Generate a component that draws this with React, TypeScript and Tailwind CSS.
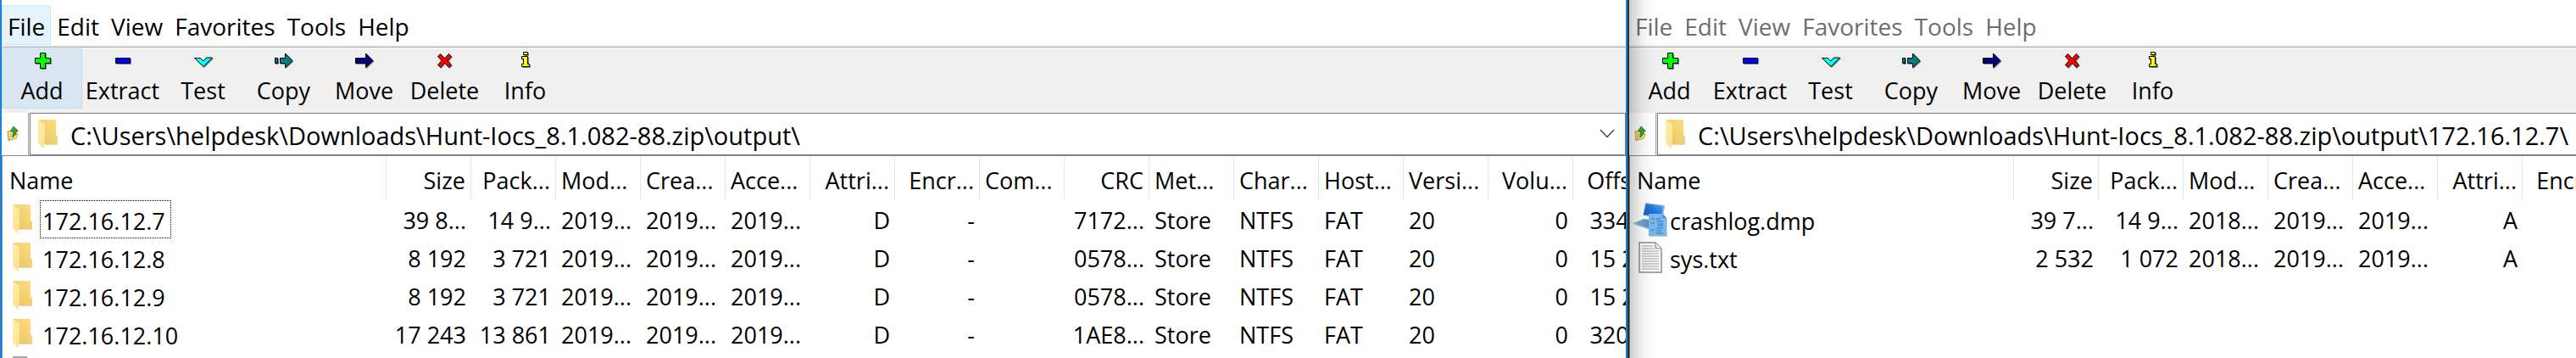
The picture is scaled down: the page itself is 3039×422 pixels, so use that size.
import type { ReactNode } from "react";

type Column = { label: string; right?: boolean };
type IconKind = "folder" | "dump" | "text" | "page";
type Entry = { name: string; icon: IconKind; focused?: boolean; cells: string[] };

const columns: Column[] = [
  { label: "Size", right: true },
  { label: "Pack...", right: true },
  { label: "Mod..." },
  { label: "Crea..." },
  { label: "Acce..." },
  { label: "Attri...", right: true },
  { label: "Encr...", right: true },
  { label: "Com..." },
  { label: "CRC", right: true },
  { label: "Met..." },
  { label: "Char..." },
  { label: "Host..." },
  { label: "Versi..." },
  { label: "Volu...", right: true },
  { label: "Offset", right: true },
];

const outputEntries: Entry[] = [
  { name: "172.16.12.7", icon: "folder", focused: true, cells: ["39 8...", "14 9...", "2019...", "2019...", "2019...", "D", "-", "", "7172...", "Store", "NTFS", "FAT", "20", "0", "334 ..."] },
  { name: "172.16.12.8", icon: "folder", cells: ["8 192", "3 721", "2019...", "2019...", "2019...", "D", "-", "", "0578...", "Store", "NTFS", "FAT", "20", "0", "15 2..."] },
  { name: "172.16.12.9", icon: "folder", cells: ["8 192", "3 721", "2019...", "2019...", "2019...", "D", "-", "", "0578...", "Store", "NTFS", "FAT", "20", "0", "15 2..."] },
  { name: "172.16.12.10", icon: "folder", cells: ["17 243", "13 861", "2019...", "2019...", "2019...", "D", "-", "", "1AE8...", "Store", "NTFS", "FAT", "20", "0", "320 ..."] },
  { name: "", icon: "page", cells: [] },
];

const hostEntries: Entry[] = [
  { name: "crashlog.dmp", icon: "dump", cells: ["39 7...", "14 9...", "2018...", "2019...", "2019...", "A"] },
  { name: "sys.txt", icon: "text", cells: ["2 532", "1 072", "2018...", "2019...", "2019...", "A"] },
];

const menus = ["File", "Edit", "View", "Favorites", "Tools", "Help"];

function Shadowed({ d, fill }: { d: string; fill: string }) {
  return (
    <>
      <path d={d} transform="translate(1 1)" fill="#808080" stroke="#808080" />
      <path d={d} fill={fill} stroke="#000" />
    </>
  );
}

const tools: { label: string; drawing: ReactNode }[] = [
  { label: "Add", drawing: <Shadowed fill="#00ff00" d="M13.5 3.5h6v6h6v6h-6v6h-6v-6h-6v-6h6z" /> },
  { label: "Extract", drawing: <Shadowed fill="#0000ff" d="M7.5 9.5h17v6h-17z" /> },
  { label: "Test", drawing: <Shadowed fill="#00ffff" d="M5.5 9.5h7l3.5 3.5 3.5-4h7l-10.5 10.5z" /> },
  {
    label: "Copy",
    drawing: (
      <>
        <Shadowed fill="#008080" d="M5.5 9.5h3v6h-3z" />
        <Shadowed fill="#008080" d="M11.5 9.5h6v-5.5l8.5 8.5-8.5 8v-5h-6z" />
      </>
    ),
  },
  { label: "Move", drawing: <Shadowed fill="#000080" d="M5.5 9.5h12v-5.5l8.5 8.5-8.5 8v-5h-12z" /> },
  {
    label: "Delete",
    drawing: <Shadowed fill="#ff0000" d="M10.5 4.5l5 5.5 5-5.5 3 3-4.5 5 4.5 5-3 3-5-5.500-5 5.500-3-3 4.500-5-4.500-5z" />,
  },
  {
    label: "Info",
    drawing: (
      <>
        <Shadowed fill="#ffff00" d="M13.5 2.5h5v3h-5z" />
        <Shadowed fill="#ffff00" d="M11.5 7.5h7v9h2v3h-9v-3h2v-6h-2z" />
      </>
    ),
  },
];

function FolderIcon() {
  return (
    <svg width="24" height="35" viewBox="0 0 24 35" className="shrink-0" aria-hidden="true">
      <defs>
        <linearGradient id="folder-back" x1="0" y1="1" x2="1" y2="0">
          <stop offset="0" stopColor="#e9c25d" />
          <stop offset="1" stopColor="#fddf83" />
        </linearGradient>
        <linearGradient id="folder-front" x1="0" y1="0" x2="1" y2="1">
          <stop offset="0" stopColor="#ffedb0" />
          <stop offset="1" stopColor="#fde08a" />
        </linearGradient>
      </defs>
      <path d="M7 29h17l-3 1H9z" fill="#d8d8d8" />
      <path d="M0 0h21v18l2 2v9H4z" fill="url(#folder-back)" />
      <path d="M0 0l8 5.500V27l-1 1v6.500L0 28z" fill="url(#folder-front)" />
    </svg>
  );
}

function DumpIcon() {
  return (
    <svg width="40" height="40" viewBox="0 0 40 40" className="shrink-0" aria-hidden="true">
      <defs>
        <linearGradient id="dump-screen" x1="0" y1="1" x2="1" y2="0">
          <stop offset="0" stopColor="#0f57b5" />
          <stop offset=".5" stopColor="#1f74d8" />
          <stop offset="1" stopColor="#5aa6ee" />
        </linearGradient>
        <linearGradient id="dump-keys" x1="0" y1="0" x2="1" y2="0">
          <stop offset="0" stopColor="#8fc0e2" />
          <stop offset="1" stopColor="#2c6390" />
        </linearGradient>
      </defs>
      <path d="M0 24l12-5 23 3-12 10z" fill="url(#dump-keys)" />
      <path d="M0 24l23 7v2L0 25z" fill="#86b9dc" />
      <path d="M14 0l23 3-2 15-24-3z" fill="#8dbbe6" />
      <path d="M15 1l20 3-2 13-21-3z" fill="url(#dump-screen)" />
      <path d="M19 14h16l5 5v21H19z" fill="#a9a9a9" opacity=".6" />
      <path d="M18 13h16l5 5v21H18z" fill="#7ab8ec" />
      <path d="M34 13l5 5h-5z" fill="#4a90d2" />
      <path
        d="M21 19h4M21 24h4M21 32h4M27 19h5M27 22h8M28 25h7M29 27h6M27 30h8M27 33h6M27 36h8"
        stroke="#2674c8"
        strokeWidth="1"
      />
    </svg>
  );
}

function PageIcon({ width }: { width: number }) {
  const right = width - 1;
  return (
    <svg width={width} height="37" viewBox={`0 0 ${width} 37`} className="shrink-0" aria-hidden="true">
      <path d={`M1 1H${right - 7}L${right} 8V36H1z`} fill="#fbfbfb" stroke="#8a8d8c" strokeWidth="1.5" />
      <path d={`M${right - 7} 1V8H${right}`} fill="#ededed" stroke="#8a8d8c" strokeWidth="1.2" />
      <path
        d={`M4 5H${right - 9}M4 8H${right - 9}M4 11H${right - 3}M4 14H${right - 3}M4 17H${right - 3}M4 20H${right - 3}M4 23H${right - 3}M4 26H${right - 3}M4 29H${right - 3}M4 32H${right - 3}`}
        stroke="#9c9f9e"
        strokeWidth="1"
      />
    </svg>
  );
}

function EntryIcon({ kind }: { kind: IconKind }) {
  if (kind === "folder") return <FolderIcon />;
  if (kind === "dump") return <DumpIcon />;
  return <PageIcon width={kind === "text" ? 28 : 24} />;
}

function UpIcon() {
  return (
    <svg width="14" height="18" viewBox="0 0 14 18" aria-hidden="true">
      <path d="M1 6l4-1 1 2 5-1v8l-9 2.500z" fill="#f3d675" stroke="#c39a2c" />
      <path d="M3 16l2-6 8-1-2 5z" fill="#fdf0b2" stroke="#c9a545" />
      <path d="M8 0l5.500 5.500H11c.3 4-1.500 6.500-5 7.500 1.500-2 2-4.500 1.500-7.500H4.500z" fill="#35a62c" stroke="#1c7417" strokeWidth=".8" />
    </svg>
  );
}

function FileList({ entries }: { entries: Entry[] }) {
  return (
    <div className="min-h-0 flex-1 overflow-hidden border-t border-l border-[#828790] bg-white">
      <table className="w-[1953px] table-fixed border-collapse text-[27px]">
        <colgroup>
          <col className="w-[453px]" />
          {columns.map((column) => (
            <col key={column.label} className="w-[100px]" />
          ))}
        </colgroup>
        <thead>
          <tr className="h-[52px]">
            <th scope="col" className="p-0 pt-px text-left font-normal">
              <div className="h-[51px] border-r border-[#e5e5e5] pt-0.5 pl-2 leading-[51px]">Name</div>
            </th>
            {columns.map((column) => (
              <th key={column.label} scope="col" className="p-0 pt-px font-normal">
                <div
                  className={`h-[51px] overflow-hidden border-r border-[#e5e5e5] px-1.5 pt-0.5 leading-[51px] whitespace-nowrap ${
                    column.right ? "text-right" : "text-left"
                  }`}
                >
                  {column.label}
                </div>
              </th>
            ))}
          </tr>
        </thead>
        <tbody>
          {entries.map((entry, row) => (
            <tr key={row} className="h-[45px]">
              <td className="p-0">
                <div className="flex h-[45px] items-center pl-1">
                  <span className="flex w-10 shrink-0 justify-center">
                    <EntryIcon kind={entry.icon} />
                  </span>
                  <span
                    className={`h-[45px] border border-dotted pt-0.5 pr-1.5 pl-0.5 leading-[43px] whitespace-nowrap ${
                      entry.focused ? "border-black" : "border-transparent"
                    }`}
                  >
                    {entry.name}
                  </span>
                </div>
              </td>
              {columns.map((column, index) => (
                <td
                  key={column.label}
                  className={`overflow-hidden p-0 px-1.5 pt-0.5 leading-[43px] whitespace-nowrap ${
                    column.right ? "text-right" : "text-left"
                  }`}
                >
                  {entry.cells[index] ?? ""}
                </td>
              ))}
            </tr>
          ))}
        </tbody>
      </table>
    </div>
  );
}

function ArchiveWindow({ path, entries, active }: { path: string; entries: Entry[]; active?: boolean }) {
  return (
    <section
      aria-label={path}
      className={`relative flex min-w-0 flex-col overflow-hidden ${
        active ? "border-x-2 border-[#1a80d9]" : "border-l-2 border-[#2b2b30]"
      }`}
    >
      <nav className={`flex h-[53px] shrink-0 bg-white pt-1.5 text-[28px] ${active ? "text-black" : "text-[#6d6d6d]"}`}>
        {menus.map((menu, index) => (
          <button
            key={menu}
            type="button"
            className={`border px-1.5 pt-1 leading-[41px] ${
              active && index === 0 ? "border-[#cce8ff] bg-[#e5f3ff]" : "border-transparent"
            }`}
          >
            {menu}
          </button>
        ))}
      </nav>
      <div className="h-1 shrink-0 border-t-2 border-b border-t-[#f0f0f0] border-b-white bg-[#a0a0a0]" />
      <div className="flex h-[76px] shrink-0 bg-[#f0f0f0] text-[27px]">
        {tools.map((tool, index) => (
          <button
            key={tool.label}
            type="button"
            className={`flex h-[71px] w-[95px] flex-col items-center border pt-px ${
              active && index === 0 ? "border-[#c0dcf3] bg-[#d8e6f1]" : "border-transparent"
            }`}
          >
            <svg width="32" height="24" viewBox="0 0 32 24" className="shrink-0" aria-hidden="true">
              {tool.drawing}
            </svg>
            <span className="mt-1 leading-10">{tool.label}</span>
          </button>
        ))}
      </div>
      <div className="flex h-[50px] shrink-0 bg-[#f0f0f0]">
        <button type="button" aria-label="Up one level" className="flex w-8 items-center border-r border-[#a0a0a0] bg-white pl-1.5">
          <UpIcon />
        </button>
        <div
          className={`ml-px flex min-w-0 flex-1 items-center border-y border-l border-[#7a7a7a] bg-white pl-[9px] ${
            active ? "border-r" : ""
          }`}
        >
          <FolderIcon />
          <input
            aria-label="Path"
            defaultValue={path}
            className="ml-3.5 h-full min-w-0 flex-1 bg-transparent pt-0.5 text-[29px] text-black outline-none"
          />
          {active && (
            <button type="button" aria-label="Show path history" className="mr-3 shrink-0">
              <svg width="18" height="12" viewBox="0 0 18 12" fill="none" stroke="#444" strokeWidth="1.5" aria-hidden="true">
                <path d="M1 1l8 8.500L17 1" />
              </svg>
            </button>
          )}
        </div>
      </div>
      <FileList entries={entries} />
      {!active && (
        <div className="pointer-events-none absolute inset-y-0 left-0 w-8 bg-linear-to-r from-black/20 via-black/5 to-transparent" />
      )}
    </section>
  );
}

export default function App() {
  return (
    <main className="grid h-screen grid-cols-[minmax(0,1920fr)_minmax(0,1119fr)] overflow-hidden bg-white font-['Open_Sans','Noto_Sans',sans-serif] text-black">
      <ArchiveWindow active path={"C:\\Users\\helpdesk\\Downloads\\Hunt-Iocs_8.1.082-88.zip\\output\\"} entries={outputEntries} />
      <ArchiveWindow path={"C:\\Users\\helpdesk\\Downloads\\Hunt-Iocs_8.1.082-88.zip\\output\\172.16.12.7\\"} entries={hostEntries} />
    </main>
  );
}
